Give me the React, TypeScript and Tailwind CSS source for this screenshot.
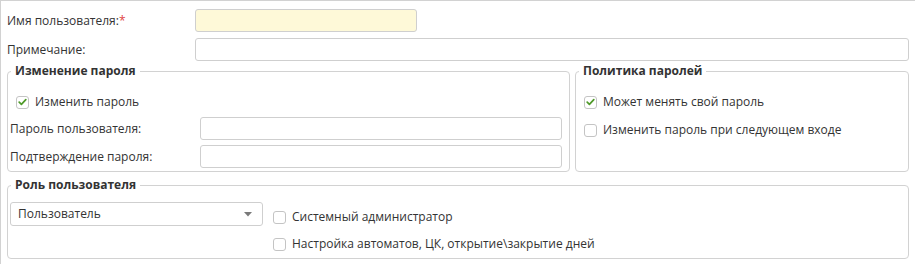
import React from 'react';

function CheckBox({ checked, label }: { checked?: boolean; label: string }) {
  return (
    <label className="flex h-4 items-center gap-[6px]">
      <span className="flex h-[13px] w-[13px] shrink-0 items-center justify-center rounded-[3px] border border-[#c4c4c4] bg-white">
        {checked && (
          <svg width="9" height="8" viewBox="0 0 9 8" fill="none">
            <path d="M1.2 4.2 L3.4 6.3 L7.8 1.6" stroke="#4f9a2a" strokeWidth="1.7" strokeLinecap="round" strokeLinejoin="round" />
          </svg>
        )}
      </span>
      <span className="whitespace-nowrap">{label}</span>
    </label>
  );
}

function TextInput({ className = '' }: { className?: string }) {
  return <div className={`h-[23px] rounded-[3px] border border-[#cfcfcf] ${className}`} />;
}

export default function App() {
  return (
    <div
      className="h-[264px] w-[915px] border-t border-l border-[#d2d2d2] bg-white pl-[6px] pr-[6px] pt-[8px] text-[12px] leading-4 text-[#333]"
      style={{ fontFamily: '"Open Sans", "Noto Sans", sans-serif' }}
    >
      <div className="flex items-center">
        <div className="w-[188px] whitespace-nowrap">
          Имя пользователя:<span className="text-[#e0463f]">*</span>
        </div>
        <TextInput className="w-[222px] bg-[#fef9d8]" />
      </div>

      <div className="mt-[6px] flex items-center">
        <div className="w-[188px] whitespace-nowrap">Примечание:</div>
        <TextInput className="flex-1 bg-white" />
      </div>

      <div className="mt-[2px] flex">
        <fieldset className="w-[563px] rounded-[4px] border border-[#d2d2d2] px-[2px] pb-[3px]">
          <legend className="ml-px px-1 font-bold">Изменение пароля</legend>
          <div className="ml-[6px] mt-[15px]">
            <CheckBox checked label="Изменить пароль" />
          </div>
          <div className="mt-[7px] flex items-center">
            <div className="w-[190px] whitespace-nowrap">Пароль пользователя:</div>
            <TextInput className="w-[362px]" />
          </div>
          <div className="mt-[5px] flex items-center">
            <div className="w-[190px] whitespace-nowrap">Подтверждение пароля:</div>
            <TextInput className="w-[362px]" />
          </div>
        </fieldset>

        <fieldset className="ml-[5px] flex-1 rounded-[4px] border border-[#d2d2d2] px-[2px]">
          <legend className="ml-px px-1 font-bold">Политика паролей</legend>
          <div className="ml-[6px] mt-[15px]">
            <CheckBox checked label="Может менять свой пароль" />
          </div>
          <div className="ml-[6px] mt-[12px]">
            <CheckBox label="Изменить пароль при следующем входе" />
          </div>
        </fieldset>
      </div>

      <fieldset className="mt-[5px] rounded-[4px] border border-[#d2d2d2] px-[2px] pb-[6px]">
        <legend className="ml-px px-1 font-bold">Роль пользователя</legend>
        <div className="flex">
          <div className="mt-[9px] flex h-[24px] w-[253px] items-center justify-between rounded-[3px] border border-[#cfcfcf] pl-[7px] pr-[10px]">
            <span>Пользователь</span>
            <svg width="8" height="5" viewBox="0 0 8 5">
              <path d="M0 0 H8 L4 4.5 Z" fill="#7a7a7a" />
            </svg>
          </div>
          <div className="ml-[10px] flex flex-col">
            <div className="mt-[16px]">
              <CheckBox label="Системный администратор" />
            </div>
            <div className="mt-[11px]">
              <CheckBox label="Настройка автоматов, ЦК, открытие\закрытие дней" />
            </div>
          </div>
        </div>
      </fieldset>
    </div>
  );
}
